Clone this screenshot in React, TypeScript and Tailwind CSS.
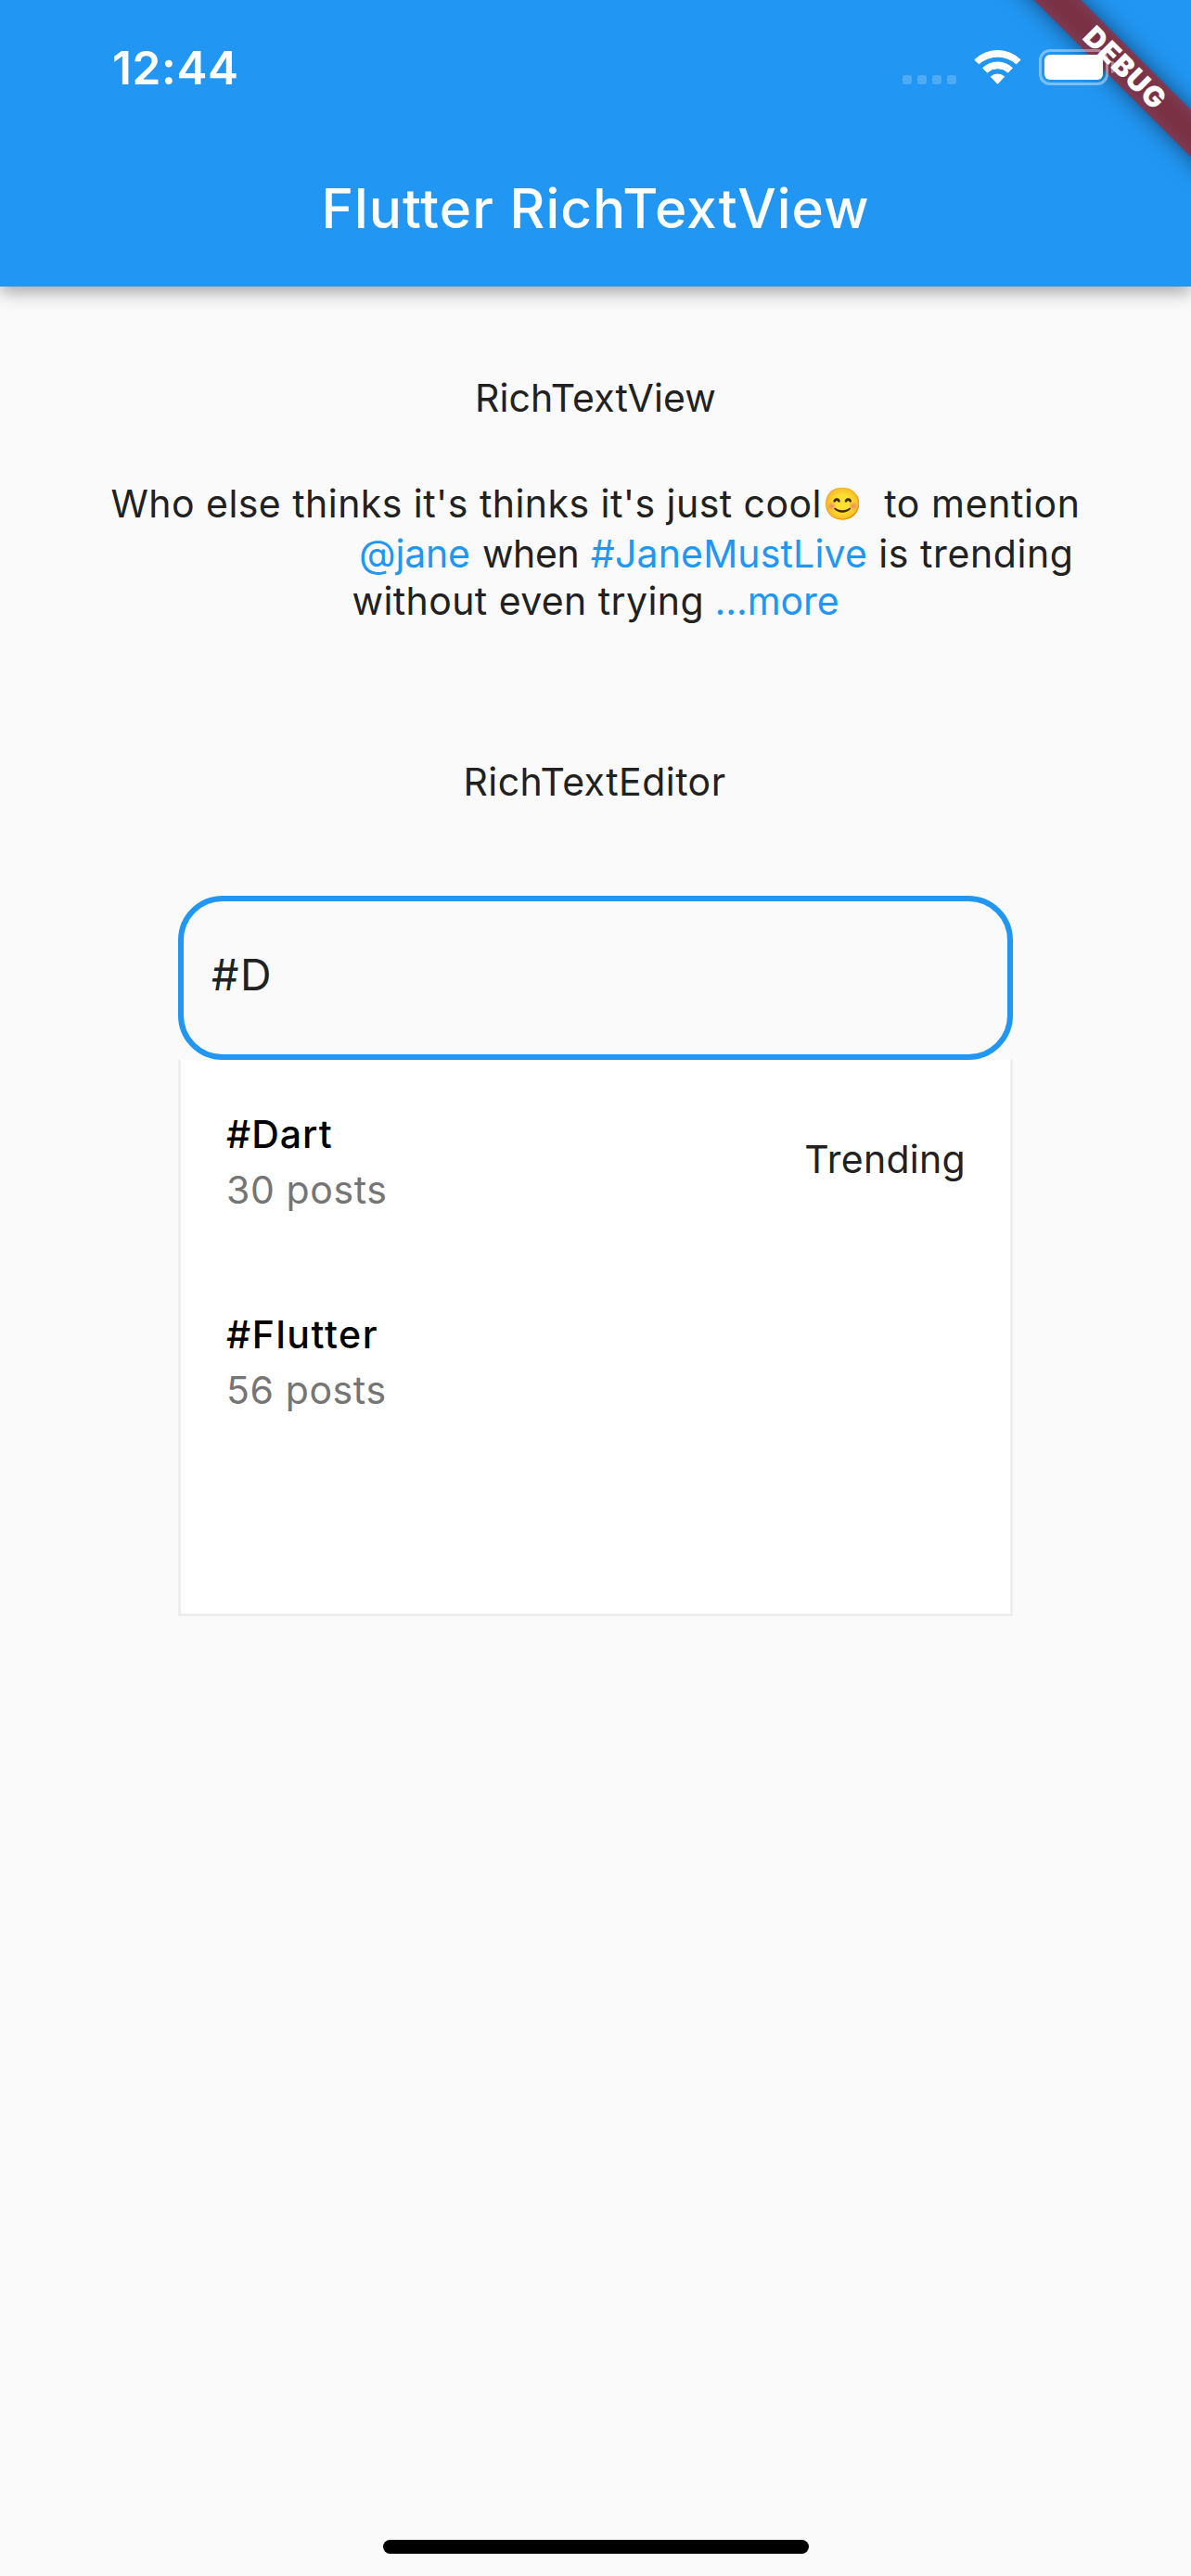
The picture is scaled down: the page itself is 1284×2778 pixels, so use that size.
function SignalDots() {
  return (
    <div className="mt-2 flex h-[10px] gap-[6px]">
      {[0, 1, 2, 3].map((i) => (
        <span key={i} className="size-[10px] rounded-[3px] bg-white/20" />
      ))}
    </div>
  );
}

function WifiIcon() {
  return (
    <svg width="51" height="37" viewBox="0 0 51 37" fill="white" stroke="white" strokeWidth="1" strokeLinejoin="round">
      <path d="M0.8 10.5A35.5 35.5 0 0 1 50.2 10.5L45.6 14.8A30.3 30.3 0 0 0 5.4 14.8Z" />
      <path d="M9.6 19.3A23.2 23.2 0 0 1 41.4 19.3L36.8 24.2A16.5 16.5 0 0 0 14.2 24.2Z" />
      <path d="M18.3 28.7A11 11 0 0 1 32.7 28.7L25.5 36.3Z" />
    </svg>
  );
}

function Battery() {
  return (
    <div className="flex items-center gap-[3px]">
      <div className="h-[39px] w-[75px] rounded-[12px] border-[3px] border-white/40 p-[3px]">
        <div className="h-full w-full rounded-[6px] bg-white" />
      </div>
      <div className="h-[13px] w-[5px] rounded-r-full bg-white/40" />
    </div>
  );
}

function DebugBanner() {
  return (
    <div className="pointer-events-none absolute top-0 right-0 z-10 size-[240px] overflow-hidden">
      <div className="absolute top-[54px] left-[-32px] h-9 w-[400px] rotate-45 bg-black/50 blur-[12px]" />
      <div className="absolute top-[54px] left-[-32px] flex h-9 w-[400px] rotate-45 items-center justify-center bg-[#b71c1c]/63 pl-[3px] text-[30.6px] leading-none font-black tracking-[1px] text-white">
        DEBUG
      </div>
    </div>
  );
}

function Suggestion({ tag, posts, note, tracking }: { tag: string; posts: string; note?: string; tracking: string }) {
  return (
    <div className="flex h-[216px] items-start justify-between pr-12 pl-[49px]">
      <div className="flex flex-col gap-[10px]">
        <span className={`font-medium text-black ${tracking}`}>{tag}</span>
        <span className="tracking-[0.6px] text-[#757575]">{posts}</span>
      </div>
      {note && <span className="mt-[27px] tracking-[0.29px]">{note}</span>}
    </div>
  );
}

export default function App() {
  return (
    <div className="relative flex h-[2778px] w-[1284px] flex-col overflow-hidden bg-[#fafafa] font-[Inter,sans-serif] text-[41px] leading-[50px] whitespace-pre text-[#212121]">
      <header className="h-[309px] bg-[#2196f3] text-white shadow-[0_6px_18px_rgba(0,0,0,0.35)]">
        <div className="relative z-20 flex h-[141px] items-start justify-between pr-[81px] pl-[121px]">
          <span className="mt-12 text-[49.5px] font-semibold tracking-[0.62px]">12:44</span>
          <div className="mt-[53px] flex h-[39px] items-center">
            <div className="mt-[19px]">
              <SignalDots />
            </div>
            <div className="ml-[19px]">
              <WifiIcon />
            </div>
            <div className="ml-[19px]">
              <Battery />
            </div>
          </div>
        </div>
        <h1 className="flex h-[168px] items-center justify-center text-[58.5px] font-medium tracking-[1.05px]">
          Flutter RichTextView
        </h1>
      </header>
      <DebugBanner />

      <main className="flex flex-col">
        <h2 className="mt-[95px] text-center tracking-[0.13px]">RichTextView</h2>
        <div className="mt-16 flex flex-col">
          <p className="h-[50px] text-center">
            <span className="tracking-[0.45px]">Who else thinks it's thinks it's just cool</span>
            <span className="ml-px inline-block h-[50px] align-top text-[34px]">😊</span>
            <span className="tracking-[0.6px]">{"  to mention"}</span>
          </p>
          <p className="mt-1 h-[50px] pl-[387px]">
            <span className="tracking-[-0.17px] text-[#2196f3]">@jane</span>
            <span className="ml-[2px] tracking-[-0.4px]"> when</span>
            <span className="ml-[1px]"> </span>
            <span className="tracking-[0.16px] text-[#2196f3]">#JaneMustLive</span>
            <span className="tracking-[0.6px]"> is trending</span>
          </p>
          <p className="mt-px h-[50px] text-center">
            <span className="tracking-[0.41px]">without even trying</span>
            <span> </span>
            <span className="tracking-[-0.08px] text-[#2196f3]">...more</span>
          </p>
        </div>
        <h2 className="mt-[145px] pr-[2px] text-center tracking-[0.45px]">RichTextEditor</h2>

        <section className="mt-[98px] flex w-[900px] flex-col self-center">
          <div className="flex h-[177px] items-center rounded-[48px] border-[6px] border-[#2196f3] pb-[7px] pl-[30px] text-[46.5px] tracking-[1.5px]">
            #D
          </div>
          <div className="h-[600px] border-x-[3px] border-b-[3px] border-[#eeeeee] bg-white pt-[55px]">
            <Suggestion tag="#Dart" posts="30 posts" note="Trending" tracking="tracking-[1.02px]" />
            <Suggestion tag="#Flutter" posts="56 posts" tracking="tracking-[1.55px]" />
          </div>
        </section>
      </main>

      <div className="mt-auto mb-6 ml-[413px] h-[15px] w-[459px] rounded-full bg-black" />
    </div>
  );
}
